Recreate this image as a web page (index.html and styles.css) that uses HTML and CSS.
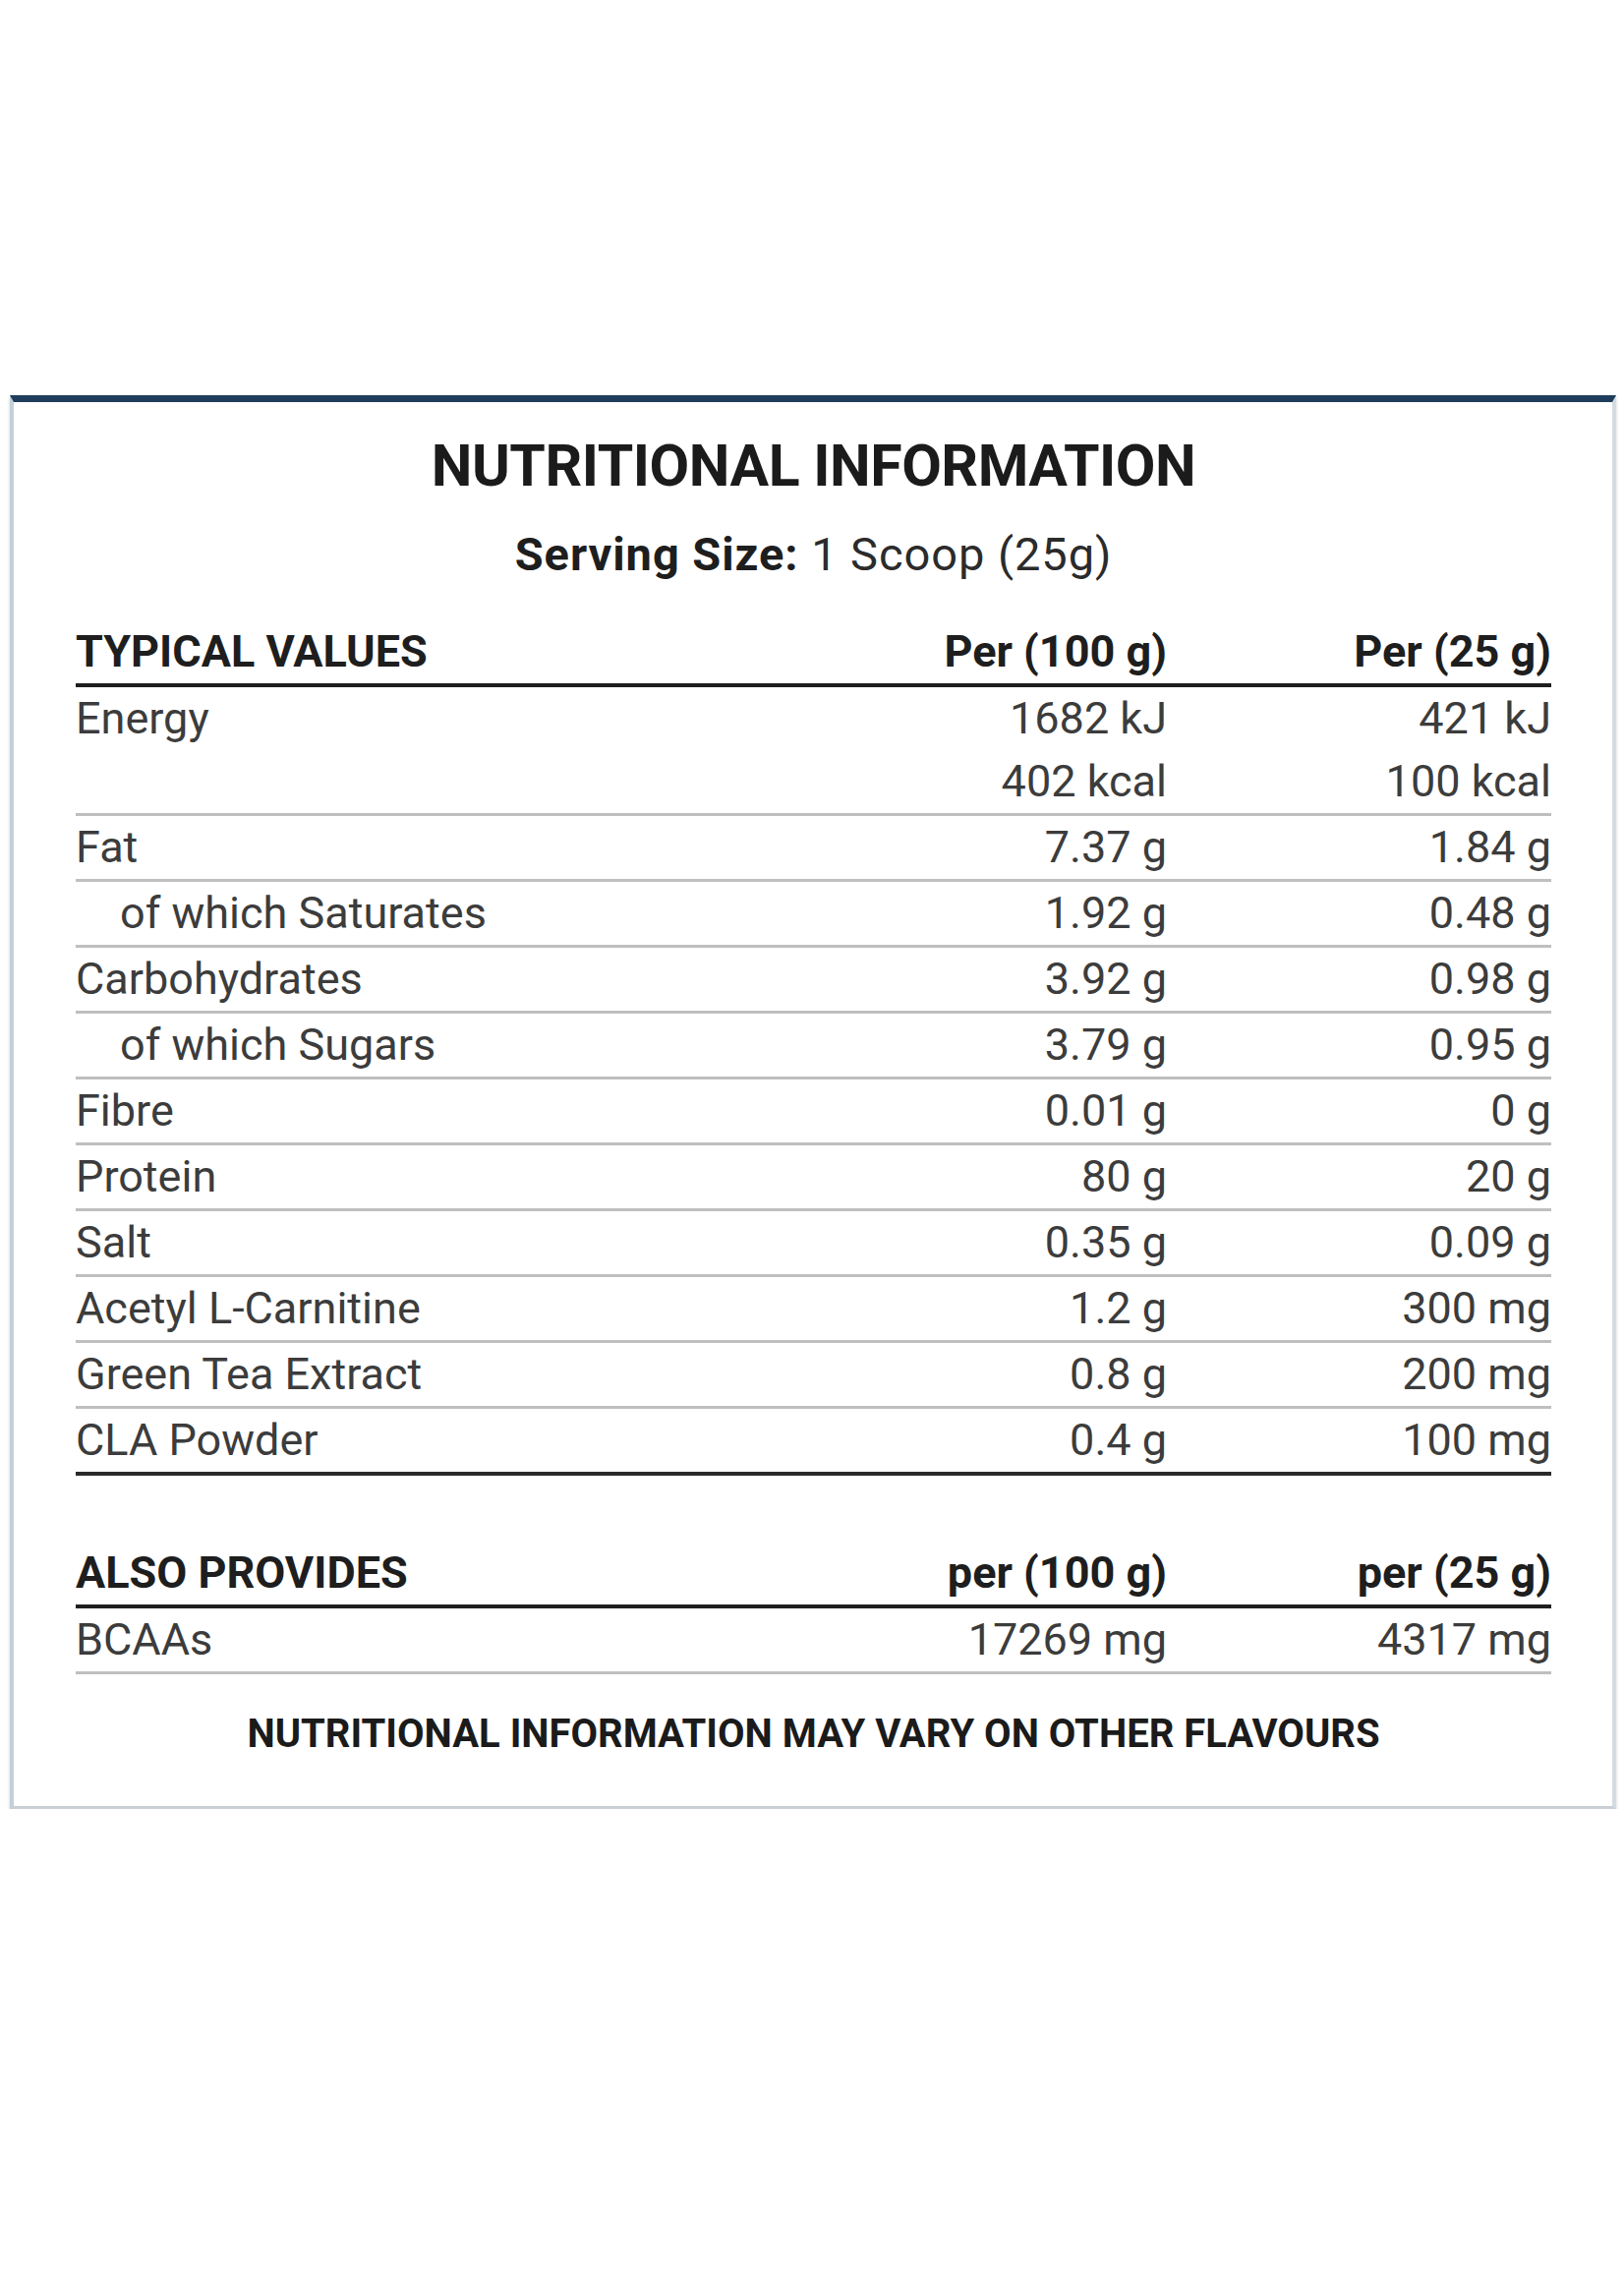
FILE: index.html
```html
<!DOCTYPE html>
<html lang="en">
<head>
<meta charset="utf-8">
<title>Nutritional Information</title>
<link rel="stylesheet" href="styles.css">
</head>
<body>
<div class="label">
  <h1 class="title">NUTRITIONAL INFORMATION</h1>
  <p class="serving"><b>Serving Size:</b> 1 Scoop (25g)</p>

  <div class="grid">
    <div class="row head"><span class="name">TYPICAL VALUES</span><span class="v">Per (100 g)</span><span class="v">Per (25 g)</span></div>
    <div class="row double"><span class="name">Energy</span><span class="v">1682 kJ<br>402 kcal</span><span class="v">421 kJ<br>100 kcal</span></div>
    <div class="row"><span class="name">Fat</span><span class="v">7.37 g</span><span class="v">1.84 g</span></div>
    <div class="row"><span class="name sub">of which Saturates</span><span class="v">1.92 g</span><span class="v">0.48 g</span></div>
    <div class="row"><span class="name">Carbohydrates</span><span class="v">3.92 g</span><span class="v">0.98 g</span></div>
    <div class="row"><span class="name sub">of which Sugars</span><span class="v">3.79 g</span><span class="v">0.95 g</span></div>
    <div class="row"><span class="name">Fibre</span><span class="v">0.01 g</span><span class="v">0 g</span></div>
    <div class="row"><span class="name">Protein</span><span class="v">80 g</span><span class="v">20 g</span></div>
    <div class="row"><span class="name">Salt</span><span class="v">0.35 g</span><span class="v">0.09 g</span></div>
    <div class="row"><span class="name">Acetyl L-Carnitine</span><span class="v">1.2 g</span><span class="v">300 mg</span></div>
    <div class="row"><span class="name">Green Tea Extract</span><span class="v">0.8 g</span><span class="v">200 mg</span></div>
    <div class="row last"><span class="name">CLA Powder</span><span class="v">0.4 g</span><span class="v">100 mg</span></div>
  </div>

  <div class="grid also">
    <div class="row head"><span class="name">ALSO PROVIDES</span><span class="v">per (100 g)</span><span class="v">per (25 g)</span></div>
    <div class="row"><span class="name">BCAAs</span><span class="v">17269 mg</span><span class="v">4317 mg</span></div>
  </div>

  <p class="note">NUTRITIONAL INFORMATION MAY VARY ON OTHER FLAVOURS</p>
</div>
</body>
</html>
```

FILE: styles.css
```css
html, body {
  margin: 0;
  padding: 0;
  background: #ffffff;
}

body {
  font-family: "Roboto", "Liberation Sans", sans-serif;
  color: #3c3c3c;
}

.label {
  box-sizing: border-box;
  margin: 402px 0 0 10px;
  width: 1634px;
  background: #fff;
  border-top: 7px solid #1f3d5b;
  border-left: 4px solid #c3d0da;
  border-right: 4px solid #d3dce3;
  border-bottom: 3px solid #c9cfd4;
  box-shadow: 0 3px 3px rgba(60, 70, 80, 0.25);
  padding: 30px 62px 48px 63px;
}

.title {
  margin: 0;
  text-align: center;
  font-size: 59px;
  line-height: 70px;
  font-weight: 700;
  color: #1b1b1b;
  letter-spacing: -0.008em;
}

.serving {
  margin: 25px 0 0;
  text-align: center;
  font-size: 47px;
  line-height: 60px;
  font-weight: 400;
  color: #2b2b2b;
  letter-spacing: 0.02em;
}

.serving b {
  font-weight: 700;
  color: #1e1e1e;
}

.grid {
  margin-top: 37px;
  font-size: 45px;
}

.grid.also {
  margin-top: 67px;
}

.row {
  display: grid;
  grid-template-columns: 1fr 300px 391px;
  line-height: 64px;
  border-bottom: 3px solid #bfbfbf;
}

.row .v {
  text-align: right;
}

.row.head {
  border-bottom: 4px solid #1f1f1f;
  font-weight: 700;
  color: #1e1e1e;
}

.row.last {
  border-bottom: 4px solid #2a2a2a;
}

.name.sub {
  padding-left: 45px;
}

.note {
  margin: 36px 0 0;
  text-align: center;
  font-size: 40px;
  line-height: 50px;
  font-weight: 700;
  color: #1b1b1b;
}
```
